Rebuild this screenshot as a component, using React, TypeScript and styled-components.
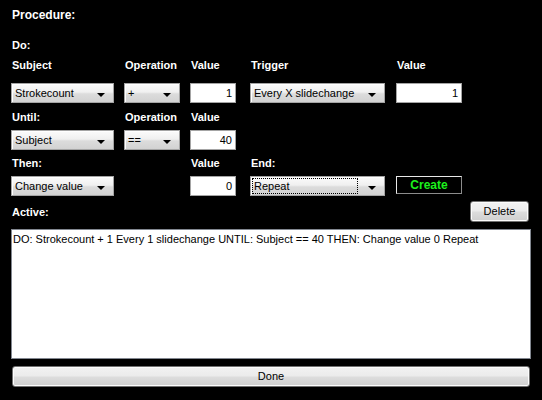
import React from 'react';
import styled, { createGlobalStyle } from 'styled-components';

const GlobalStyle = createGlobalStyle`
  html, body {
    margin: 0;
    padding: 0;
    background: #000;
  }
  body {
    font-family: 'Liberation Sans', Arial, sans-serif;
    font-size: 11px;
  }
`;

const Panel = styled.div`
  width: 542px;
  height: 400px;
  box-sizing: border-box;
  padding: 8px 11px 0 11px;
  background: #000;
  display: flex;
  flex-direction: column;
`;

const Title = styled.div`
  color: #fff;
  font-weight: 700;
  font-size: 12px;
  line-height: 14px;
  padding-left: 1px;
`;

const FormGrid = styled.div`
  margin-top: 14px;
  display: grid;
  grid-template-columns: 113px 66px 60px 146px 66px;
  grid-template-rows: 18px 29px 20px 27px 20px 26px 20px;
`;

const Label = styled.div<{ $top?: boolean }>`
  color: #fff;
  font-weight: 700;
  font-size: 11px;
  line-height: 22px;
  padding-left: 1px;
  align-self: ${(p) => (p.$top ? 'start' : 'center')};
  white-space: nowrap;
`;

const Combo = styled.div<{ $w: number }>`
  width: ${(p) => p.$w}px;
  height: 20px;
  box-sizing: border-box;
  border: 1px solid #a4a4a4;
  background: linear-gradient(#fbfbfb 0%, #f0f0f0 45%, #dcdcdc 55%, #d2d2d2 100%);
  box-shadow: inset 1px 1px 0 #fff;
  display: flex;
  align-items: center;
  padding: 0 8px 0 2px;
  color: #000;
  font-size: 11px;
`;

const ComboText = styled.span<{ $focus?: boolean }>`
  flex: 1;
  line-height: 14px;
  padding-left: 1px;
  margin-right: ${(p) => (p.$focus ? '11px' : '0')};
  outline: ${(p) => (p.$focus ? '1px dotted #000' : 'none')};
  white-space: nowrap;
`;

const Arrow = styled.span`
  width: 0;
  height: 0;
  margin-top: 3px;
  border-left: 4px solid transparent;
  border-right: 4px solid transparent;
  border-top: 4px solid #000;
`;

const NumberBox = styled.div<{ $w: number }>`
  width: ${(p) => p.$w}px;
  height: 20px;
  box-sizing: border-box;
  border: 1px solid #a4a4a4;
  background: #fff;
  color: #000;
  text-align: right;
  padding-right: 3px;
  line-height: 18px;
`;

const CreateButton = styled.div`
  width: 66px;
  height: 18px;
  box-sizing: border-box;
  border: 1px solid #e8e8e8;
  border-right-color: #8c8c8c;
  border-bottom-color: #8c8c8c;
  background: #000;
  color: #1cf01c;
  font-weight: 700;
  font-size: 12px;
  text-align: center;
  line-height: 16px;
  align-self: start;
`;

const ActiveBar = styled.div`
  margin-top: 5px;
  height: 21px;
  display: flex;
  align-items: center;
  justify-content: space-between;
  padding-right: 2px;
`;

const Button = styled.div<{ $w?: string }>`
  width: ${(p) => p.$w ?? 'auto'};
  height: 21px;
  box-sizing: border-box;
  border: 1px solid #707070;
  border-radius: 3px;
  background: linear-gradient(#f2f2f2 0%, #ebebeb 48%, #dddddd 52%, #cfcfcf 100%);
  box-shadow: inset 0 0 0 1px #fcfcfc;
  color: #000;
  font-size: 11px;
  text-align: center;
  line-height: 19px;
`;

const ActiveList = styled.div`
  margin-top: 7px;
  height: 130px;
  box-sizing: border-box;
  border: 1px solid #828790;
  background: #fff;
  color: #000;
  padding: 2px 0 0 1px;
  line-height: 14px;
  white-space: nowrap;
`;

const DoneRow = styled.div`
  margin: 7px 1px 0 1px;
`;

type ComboProps = { w: number; value: string; focus?: boolean };

function ComboBox({ w, value, focus }: ComboProps) {
  return (
    <Combo $w={w}>
      <ComboText $focus={focus}>{value}</ComboText>
      <Arrow />
    </Combo>
  );
}

const Empty = styled.div``;

export default function App() {
  return (
    <>
      <GlobalStyle />
      <Panel>
        <Title>Procedure:</Title>
        <FormGrid>
          <Label>Do:</Label>
          <Empty />
          <Empty />
          <Empty />
          <Empty />

          <Label $top>Subject</Label>
          <Label $top>Operation</Label>
          <Label $top>Value</Label>
          <Label $top>Trigger</Label>
          <Label $top>Value</Label>

          <ComboBox w={103} value="Strokecount" />
          <ComboBox w={56} value="+" />
          <NumberBox $w={46}>1</NumberBox>
          <ComboBox w={135} value="Every X slidechange" />
          <NumberBox $w={66}>1</NumberBox>

          <Label>Until:</Label>
          <Label>Operation</Label>
          <Label>Value</Label>
          <Empty />
          <Empty />

          <ComboBox w={103} value="Subject" />
          <ComboBox w={56} value="==" />
          <NumberBox $w={46}>40</NumberBox>
          <Empty />
          <Empty />

          <Label>Then:</Label>
          <Empty />
          <Label>Value</Label>
          <Label>End:</Label>
          <Empty />

          <ComboBox w={103} value="Change value" />
          <Empty />
          <NumberBox $w={46}>0</NumberBox>
          <ComboBox w={135} value="Repeat" focus />
          <CreateButton>Create</CreateButton>
        </FormGrid>

        <ActiveBar>
          <Label>Active:</Label>
          <Button $w="59px">Delete</Button>
        </ActiveBar>

        <ActiveList>
          DO: Strokecount + 1 Every 1 slidechange UNTIL: Subject == 40 THEN: Change value 0 Repeat
        </ActiveList>

        <DoneRow>
          <Button>Done</Button>
        </DoneRow>
      </Panel>
    </>
  );
}
